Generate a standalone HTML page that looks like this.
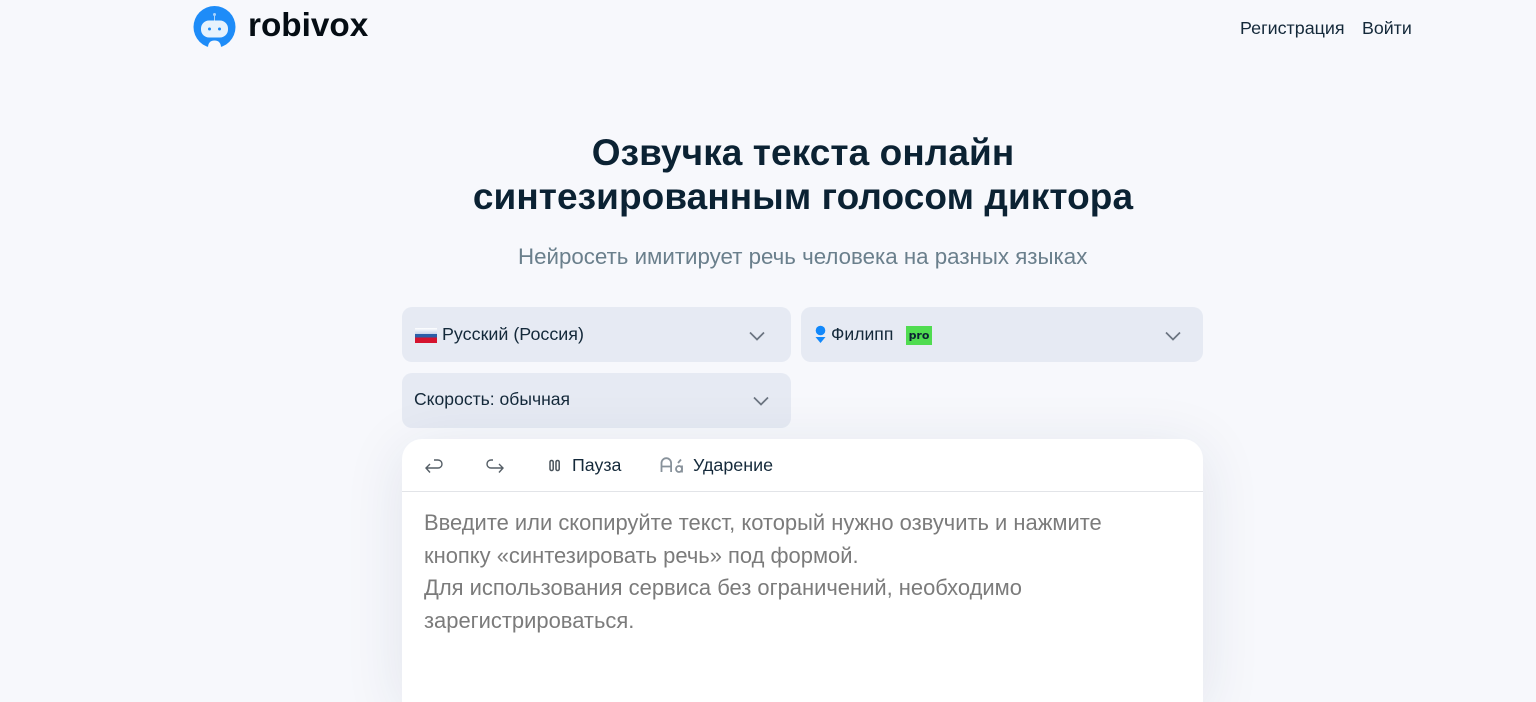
<!DOCTYPE html>
<html lang="ru"><head><meta charset="utf-8"><title>robivox</title>
<style>
*{box-sizing:border-box}
html,body{margin:0;padding:0;width:1536px;height:702px;overflow:hidden;background:#f7f8fc}
#p{position:relative;width:1536px;height:702px;overflow:hidden;background:#f7f8fc;font-family:"Liberation Sans","DejaVu Sans",sans-serif;color:#0b2233}
.a{position:absolute;white-space:nowrap}
.sel{position:absolute;background:#e6eaf3;border-radius:10px;height:55px}
.chev{position:absolute;width:16px;height:10px}
h1{position:absolute;margin:0;left:303px;width:1000px;text-align:center;font-size:37px;line-height:44px;font-weight:700;color:#0b2233;letter-spacing:.08px}
</style></head><body><div id="p">
<svg class="a" style="left:193px;top:6px" width="43" height="42" viewBox="0 0 43 42">
<circle cx="21.500" cy="21" r="21" fill="#1e8cf8"/>
<circle cx="21.500" cy="8.500" r="1.500" fill="#a9d3fb"/><rect x="21" y="9" width="1" height="6" fill="#a9d3fb"/>
<path d="M15 41.500c0-4 2-7 6.500-7s6.500 3 6.500 7c-2 .5-4 .5-6.500 .5s-4.500 0-6.500-.5z" fill="#f7f8fc"/>
<rect x="8" y="14.500" width="27" height="17" rx="8" fill="#e6f2fd"/>
<circle cx="16.500" cy="23" r="1.500" fill="#1e8cf8"/><circle cx="26.500" cy="23" r="1.500" fill="#1e8cf8"/>
</svg>
<div class="a" style="left:248px;top:7px;font-size:33.300px;line-height:38px;font-weight:700;color:#050d14">robivox</div>
<div class="a" style="left:1240px;top:18px;font-size:17.900px;line-height:20px;color:#14293a">Регистрация</div>
<div class="a" style="left:1362px;top:18px;font-size:17.800px;line-height:20px;color:#14293a">Войти</div>
<h1 style="top:131px">Озвучка текста онлайн<br>синтезированным голосом диктора</h1>
<div class="a" style="left:518px;top:244px;font-size:22.300px;line-height:26px;color:#6a7f8c">Нейросеть имитирует речь человека на разных языках</div>

<div class="sel" style="left:402px;top:307px;width:389px"></div>
<svg class="a" style="left:415px;top:328px" width="22" height="15" viewBox="0 0 22 15"><defs><linearGradient id="w" x1="0" y1="0" x2="0" y2="1"><stop offset="0" stop-color="#fff"/><stop offset="1" stop-color="#c8d4ea"/></linearGradient></defs><rect width="22" height="6" fill="url(#w)"/><rect y="6" width="22" height="3.500" fill="#2b5ea8"/><rect y="9.500" width="22" height="5.500" fill="#d5132e"/></svg>
<div class="a" style="left:442px;top:324px;font-size:17.900px;line-height:20px;color:#14293a">Русский (Россия)</div>
<svg class="chev" style="left:749px;top:331px" viewBox="0 0 16 10"><path d="M1 1.500l7 7 7-7" fill="none" stroke="#6b7480" stroke-width="1.700"/></svg>

<div class="sel" style="left:801px;top:307px;width:402px"></div>
<svg class="a" style="left:815px;top:325px" width="12" height="20" viewBox="0 0 12 20"><circle cx="5.500" cy="5.500" r="4.800" fill="#1188fb"/><path d="M.5 12h10l-5 6z" fill="#1188fb"/></svg>
<div class="a" style="left:831px;top:324px;font-size:17.600px;line-height:20px;color:#14293a">Филипп</div>
<div class="a" style="left:906px;top:326px;width:26px;height:19px;background:#50dc50;font-family:'DejaVu Sans',sans-serif;font-size:11px;font-weight:700;line-height:19px;text-align:center;color:#0b2233">pro</div>
<svg class="chev" style="left:1165px;top:331px" viewBox="0 0 16 10"><path d="M1 1.500l7 7 7-7" fill="none" stroke="#6b7480" stroke-width="1.700"/></svg>

<div class="sel" style="left:402px;top:373px;width:389px"></div>
<div class="a" style="left:414px;top:389px;font-size:17.560px;line-height:20px;color:#14293a">Скорость: обычная</div>
<svg class="chev" style="left:753px;top:396px" viewBox="0 0 16 10"><path d="M1 1.500l7 7 7-7" fill="none" stroke="#6b7480" stroke-width="1.700"/></svg>

<div class="a" style="left:402px;top:438.500px;width:801px;height:263.500px;background:#fff;border-radius:20px 20px 0 0;box-shadow:0 10px 60px rgba(30,50,90,.10)"></div>
<div class="a" style="left:402px;top:491px;width:801px;height:1px;background:#e2e4e8"></div>
<svg class="a" style="left:424px;top:458px" width="20" height="17" viewBox="0 0 20 17" fill="none" stroke="#555e66" stroke-width="1.400"><path d="M10 2h4a4 4 0 0 1 0 8H2M6 6l-4 4 4 4.500"/></svg>
<svg class="a" style="left:485px;top:458px" width="20" height="17" viewBox="0 0 20 17" fill="none" stroke="#555e66" stroke-width="1.400"><path d="M8 2H6a4 4 0 0 0 0 8h12M14 6l4 4-4 4.500"/></svg>
<svg class="a" style="left:549px;top:459px" width="12" height="13" viewBox="0 0 12 13" fill="none" stroke="#4a545c" stroke-width="1.500"><rect x="1" y="1.500" width="3.200" height="10" rx="1.500"/><rect x="7" y="1.500" width="3.200" height="10" rx="1.500"/></svg>
<div class="a" style="left:572px;top:455px;font-size:17.800px;line-height:20px;color:#14293a">Пауза</div>
<svg class="a" style="left:660px;top:456px" width="24" height="19" viewBox="0 0 24 19" fill="none" stroke="#88929b" stroke-width="1.800"><path d="M1.500 16V7a4.800 4.800 0 0 1 9.600 0v9M1.500 10.500h9.600"/><circle cx="19" cy="13" r="3"/><path d="M22 9.500V16.500M18 7l3-3.500"/></svg>
<div class="a" style="left:693px;top:455px;font-size:17.900px;line-height:20px;color:#14293a">Ударение</div>
<div class="a" style="left:424px;top:507px;font-size:21.940px;line-height:32.700px;color:#7b7b7b">Введите или скопируйте текст, который нужно озвучить и нажмите<br>кнопку «синтезировать речь» под формой.<br>Для использования сервиса без ограничений, необходимо<br>зарегистрироваться.</div>
</div></body></html>
